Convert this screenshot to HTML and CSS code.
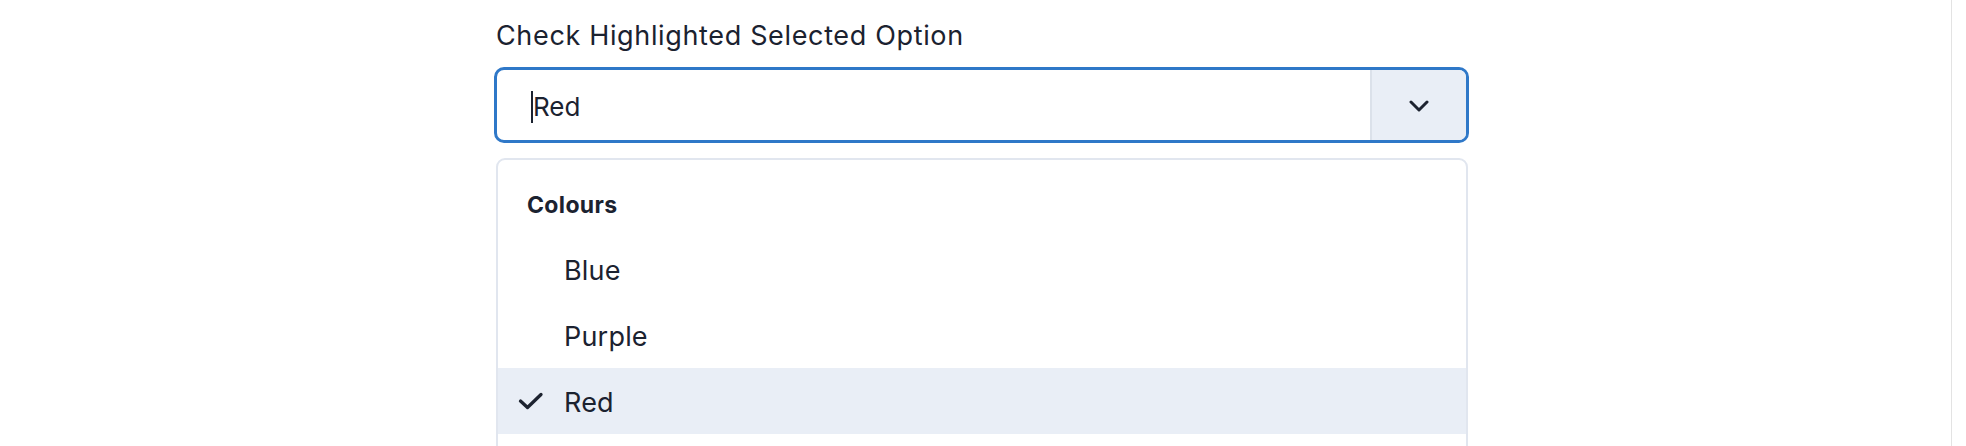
FILE: index.html
```html
<!DOCTYPE html>
<html lang="en">
<head>
<meta charset="utf-8">
<title>Check Highlighted Selected Option</title>
<link rel="stylesheet" href="styles.css">
</head>
<body>
<div class="page">
  <main class="main">
    <div class="field">
      <label class="label" for="colour">Check Highlighted Selected Option</label>
      <div class="control">
        <div class="value" id="colour"><span class="caret"></span>Red</div>
        <div class="toggle">
          <svg class="chevron" width="20" height="12" viewBox="0 0 20 12" aria-hidden="true">
            <path d="M2 2 L10 10 L18 2" fill="none" stroke="#1d2330" stroke-width="3" stroke-linecap="round" stroke-linejoin="round"/>
          </svg>
        </div>
      </div>
      <div class="menu">
        <div class="group-title">Colours</div>
        <div class="option"><span class="check"></span><span class="option-label">Blue</span></div>
        <div class="option"><span class="check"></span><span class="option-label">Purple</span></div>
        <div class="option selected"><span class="check">
          <svg width="26" height="18" viewBox="0 0 26 18" aria-hidden="true">
            <path d="M2.5 9 L9.5 15.5 L23 2.5" fill="none" stroke="#1d2330" stroke-width="3.3" stroke-linecap="round" stroke-linejoin="round"/>
          </svg>
        </span><span class="option-label">Red</span></div>
        <div class="option"><span class="check"></span><span class="option-label"></span></div>
      </div>
    </div>
  </main>
  <div class="gutter"></div>
</div>
</body>
</html>
```

FILE: styles.css
```css
html, body {
  margin: 0;
  padding: 0;
  background: #ffffff;
}

body {
  font-family: Inter, "Noto Sans", "Liberation Sans", sans-serif;
  color: #1b2230;
  overflow: hidden;
}

.page {
  display: flex;
  height: 446px;
  overflow: hidden;
}

.main {
  flex: 1;
  display: flex;
  justify-content: center;
  padding-left: 12px;
}

.gutter {
  width: 14px;
  border-left: 1px solid #e3e3e3;
  background: #ffffff;
}

.field {
  width: 975px;
  display: flex;
  flex-direction: column;
  padding-top: 20px;
}

.field > * {
  flex-shrink: 0;
}

.label {
  font-size: 27px;
  line-height: 32px;
  font-weight: 400;
  letter-spacing: 0.65px;
  margin-bottom: 15px;
  padding-left: 2px;
}

.control {
  display: flex;
  height: 76px;
  box-sizing: border-box;
  border: 3px solid #2f78c8;
  border-radius: 10px;
  overflow: hidden;
}

.value {
  flex: 1;
  display: flex;
  align-items: center;
  padding-left: 34px;
  font-size: 26px;
  padding-top: 2px;
}

.caret {
  width: 2px;
  height: 32px;
  background: #1b2230;
  margin-top: 1px;
}

.toggle {
  width: 94px;
  border-left: 2px solid #dbe1ea;
  background: #e9eef6;
  display: flex;
  align-items: center;
  justify-content: center;
}

.chevron {
  display: block;
  margin-top: 1px;
}

.menu {
  margin: 15px 1px 0 2px;
  border: 2px solid #e1e6ef;
  border-radius: 9px;
  background: #ffffff;
  height: 400px;
  box-sizing: border-box;
}

.group-title {
  font-size: 23px;
  font-weight: 700;
  line-height: 27px;
  letter-spacing: 0.35px;
  padding: 32px 0 17px 29px;
}

.option {
  height: 66px;
  display: flex;
  align-items: center;
  padding-left: 20px;
  font-size: 27px;
  letter-spacing: 0.2px;
  padding-top: 3px;
  box-sizing: border-box;
}

.option.selected {
  background: #e9eef6;
}

.check {
  width: 26px;
  margin-right: 20px;
  display: flex;
  align-items: center;
  margin-top: -4px;
}

.check svg {
  display: block;
}
```
